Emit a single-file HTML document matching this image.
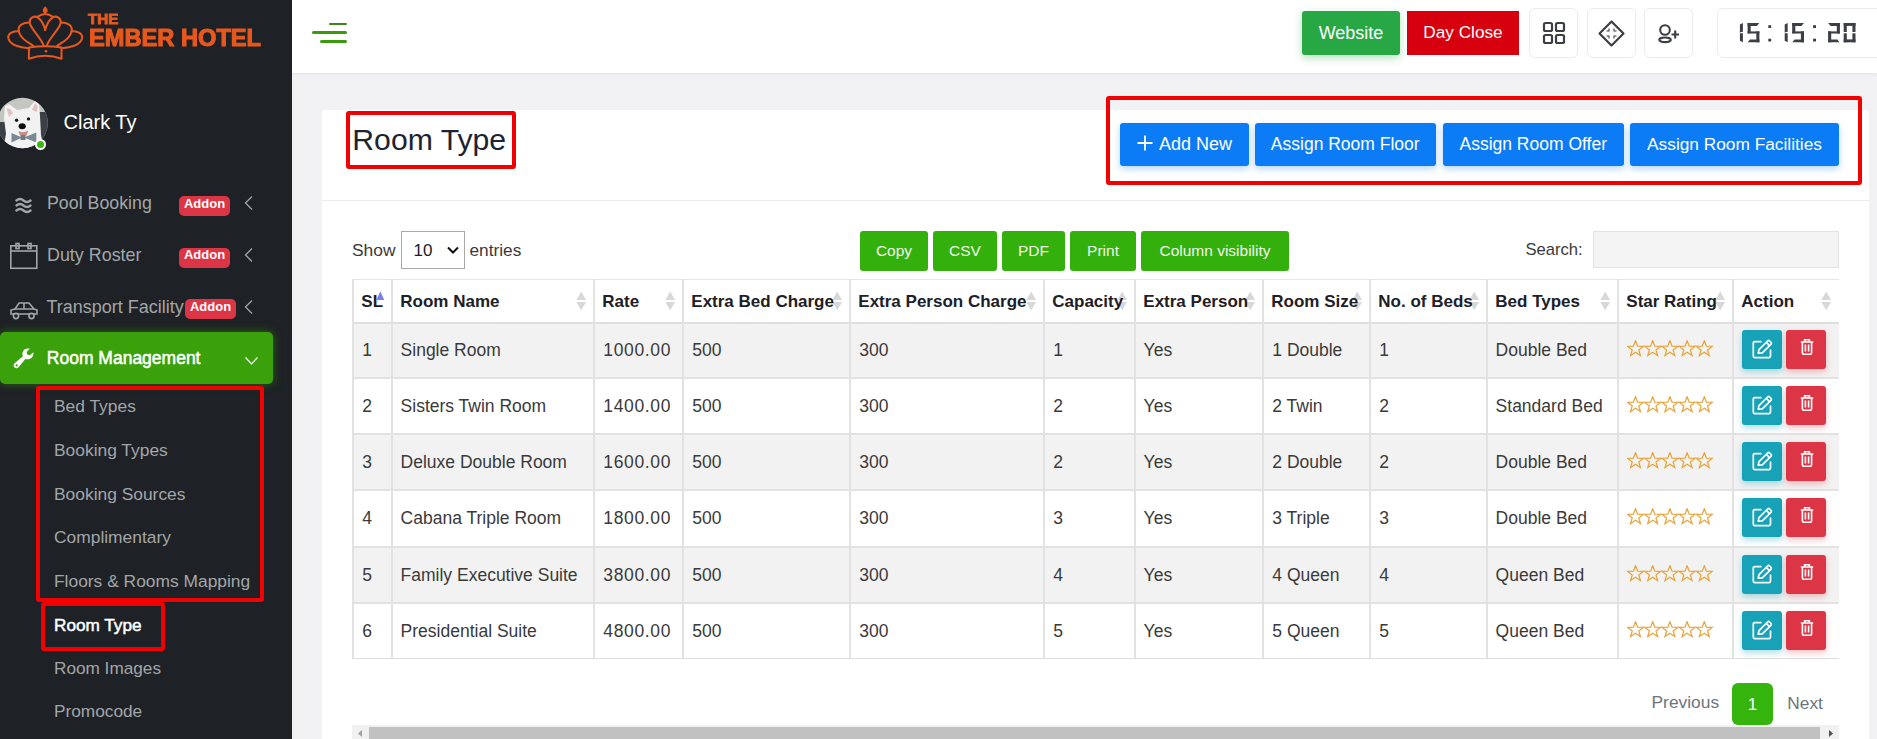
<!DOCTYPE html><html><head><meta charset="utf-8"><style>
*{box-sizing:border-box;margin:0;padding:0}
html,body{width:1877px;height:739px;overflow:hidden;background:#f2f2f4;font-family:"Liberation Sans", sans-serif}
.t{position:absolute;white-space:nowrap;line-height:1}
.a{position:absolute}
.rb{position:absolute;border:4.3px solid #f00000;border-radius:3px}
.btn{position:absolute;display:flex;align-items:center;justify-content:center;color:#fff;white-space:nowrap;line-height:1}
</style></head><body>
<div class="a" style="left:0;top:0;width:292px;height:739px;background:#1e2125"></div><svg class="a" style="left:0;top:0" width="92" height="64" viewBox="0 0 92 64">
<g fill="none" stroke="#e8581d" stroke-width="2" stroke-linecap="round" stroke-linejoin="round">
<path d="M37.5 16.8 Q45.2 11.2 52.9 16.8"/>
<path d="M43.6 45.5 C40 36 30.5 29 29.6 22.5 C29.3 17.5 34.5 15.3 38 17.6 C41.5 20.2 44 25 45.2 30"/>
<path d="M46.8 45.5 C50.4 36 59.9 29 60.8 22.5 C61.1 17.5 55.9 15.3 52.4 17.6 C48.9 20.2 46.4 25 45.2 30"/>
<path d="M29.6 22.6 C23 22.5 18.6 25 18.6 29.5 C18.8 34.5 22.5 38.5 26 41 C29 43 31.5 44.5 33.8 46.3"/>
<path d="M60.8 22.6 C67.4 22.5 71.8 25 71.8 29.5 C71.6 34.5 67.9 38.5 64.4 41 C61.4 43 58.9 44.5 56.6 46.3"/>
<path d="M18.8 31.2 C13 31 8.3 33 8.2 37 C8.3 41 11 43.5 15.5 45.5 C20 47.3 25 48 29 48.3"/>
<path d="M71.6 31.2 C77.4 31 82.1 33 82.2 37 C82.1 41 79.4 43.5 74.9 45.5 C70.4 47.3 65.4 48 61.4 48.3"/>
<path d="M28.9 47.4 Q45.2 45.2 61.5 47.4 L61.5 58.8 Q45.2 52.6 28.9 58.8 Z"/>
</g>
<path d="M45.2 6.3 C46.8 8 47.8 9.5 47.6 11 C47.4 12.4 46.4 13 45.2 13 C44 13 43 12.4 42.8 11 C42.6 9.5 43.6 8 45.2 6.3 Z" fill="#e8581d"/>
<circle cx="46" cy="51.3" r="1.3" fill="#e8581d"/>
</svg><div class="t" style="left:88.4px;top:12.43px;font-size:14.5px;color:#e8581d;font-weight:700;-webkit-text-stroke:0.9px #e8581d;transform:scaleX(1.05);transform-origin:left">THE</div>
<div class="t" style="left:88.6px;top:26.08px;font-size:24px;color:#e8581d;font-weight:700;-webkit-text-stroke:1.1px #e8581d;transform:scaleX(0.985);transform-origin:left">EMBER HOTEL</div>
<svg class="a" style="left:0;top:95px" width="52" height="57" viewBox="0 95 52 57">
<defs><clipPath id="cc"><circle cx="22.5" cy="123" r="25.3"/></clipPath><filter id="bl"><feGaussianBlur stdDeviation="0.7"/></filter></defs>
<g clip-path="url(#cc)">
<rect x="-5" y="95" width="60" height="60" fill="#c3c7c0"/>
<g filter="url(#bl)">
<rect x="39" y="112" width="14" height="30" fill="#3b4046"/>
<rect x="-5" y="122" width="13" height="20" fill="#3b4046"/>
<path d="M5 106 L9 104 L17 110 L29 108 L35 100.5 L39 104 L40 116 L41 135 L44 150 L3 150 L6 134 L4 118 Z" fill="#f2f2f2"/>
<path d="M6.5 108 L10 109 L13 113 L9 117 Z" fill="#e3c2c2"/>
<path d="M35 103 L37.5 106 L37 112 L32 110 Z" fill="#e3c2c2"/>
<circle cx="16.6" cy="120.3" r="1.7" fill="#1a1a1a"/>
<circle cx="28.5" cy="118.9" r="1.7" fill="#1a1a1a"/>
<ellipse cx="22.2" cy="126.3" rx="3.6" ry="3" fill="#111"/>
<path d="M18.5 131 Q23 133.5 28 130.5 L27 135 Q23 137 19.5 134.5 Z" fill="#c98b8b"/>
<path d="M11.5 133 L22 137.5 L11.5 142.5 Z M36.3 132.5 L24 137.5 L36.3 142.5 Z" fill="#7b8893"/>
<rect x="20.5" y="135" width="5" height="5" fill="#6f7c86"/>
</g></g></svg><div class="a" style="left:34.7px;top:138.7px;width:11.6px;height:11.6px;border-radius:50%;background:#fff"></div><div class="a" style="left:37px;top:141px;width:7px;height:7px;border-radius:50%;background:#3cb712"></div><div class="t" style="left:63.5px;top:111.87px;font-size:20px;color:#ffffff;font-weight:400;">Clark Ty</div>
<div class="t" style="left:47px;top:195.03px;font-size:17.8px;color:#a3a6a9;font-weight:400;">Pool Booking</div>
<div class="t" style="left:47px;top:247.35px;font-size:17.9px;color:#a3a6a9;font-weight:400;">Duty Roster</div>
<div class="t" style="left:46.5px;top:297.96px;font-size:18.0px;color:#a3a6a9;font-weight:400;">Transport Facility</div>
<div class="btn" style="left:179px;top:196px;width:51px;height:20px;border-radius:5px;background:#dc3545;font-size:13px;font-weight:700;padding-bottom:5.5px">Addon</div>
<div class="btn" style="left:179px;top:247.5px;width:51px;height:20px;border-radius:5px;background:#dc3545;font-size:13px;font-weight:700;padding-bottom:5.5px">Addon</div>
<div class="btn" style="left:185px;top:299px;width:51px;height:20px;border-radius:5px;background:#dc3545;font-size:13px;font-weight:700;padding-bottom:5.5px">Addon</div>
<svg class="a" style="left:244px;top:195px" width="10" height="16" viewBox="0 0 10 16"><path d="M8 1.5 L1.5 8 L8 14.5" fill="none" stroke="#a3a6a9" stroke-width="1.3"/></svg>
<svg class="a" style="left:244px;top:247px" width="10" height="16" viewBox="0 0 10 16"><path d="M8 1.5 L1.5 8 L8 14.5" fill="none" stroke="#a3a6a9" stroke-width="1.3"/></svg>
<svg class="a" style="left:244px;top:298.5px" width="10" height="16" viewBox="0 0 10 16"><path d="M8 1.5 L1.5 8 L8 14.5" fill="none" stroke="#a3a6a9" stroke-width="1.3"/></svg>
<svg class="a" style="left:14px;top:197px" width="20" height="17" viewBox="0 0 20 17"><g fill="none" stroke="#a3a6a9" stroke-width="2.4" stroke-linecap="round">
<path d="M2.5 3.5 Q6 0.5 9.5 3.5 T16.5 3.5"/><path d="M2.5 8.5 Q6 5.5 9.5 8.5 T16.5 8.5"/><path d="M2.5 13.5 Q6 10.5 9.5 13.5 T16.5 13.5"/></g></svg><svg class="a" style="left:9px;top:242px" width="30" height="28" viewBox="0 0 30 28"><g fill="none" stroke="#a3a6a9" stroke-width="1.6">
<rect x="1.8" y="3.8" width="26" height="22.5"/><path d="M1.8 9 H27.8"/><rect x="7" y="1.5" width="3" height="5"/><rect x="19" y="1.5" width="3" height="5"/></g></svg><svg class="a" style="left:9px;top:301px" width="30" height="20" viewBox="0 0 30 20"><g fill="none" stroke="#a3a6a9" stroke-width="1.6">
<path d="M2 13 V9 L6 8 L10 2 H20 L25 8 L28 9 V13 Z"/><path d="M6 8 H25 M15 2 V8"/><circle cx="7" cy="15" r="2.6" fill="#1e2125"/><circle cx="22.5" cy="15" r="2.6" fill="#1e2125"/></g></svg><div class="a" style="left:0;top:332px;width:273px;height:52px;border-radius:5px;background:#3aa10b;box-shadow:0 0 10px rgba(58,161,11,0.55)"></div><svg class="a" style="left:12px;top:348px" width="23" height="21" viewBox="0 0 23 21"><path d="M21.2 4.2 L18 7.3 L15.3 6.6 L14.6 3.9 L17.8 0.8 C14.9 -0.2 11.9 1 10.8 3.8 C10.2 5.3 10.3 6.9 10.9 8.2 L2.6 15.3 C1.3 16.5 1.3 18.4 2.5 19.5 C3.7 20.6 5.5 20.5 6.6 19.2 L13.3 10.9 C14.7 11.5 16.4 11.5 17.9 10.8 C20.6 9.6 21.9 6.9 21.2 4.2 Z" fill="#ffffff"/><circle cx="4.6" cy="17.4" r="1.1" fill="#3aa10b"/></svg><div class="t" style="left:46.8px;top:350.19px;font-size:17.5px;color:#ffffff;font-weight:400;-webkit-text-stroke:0.5px #ffffff">Room Management</div>
<svg class="a" style="left:244px;top:355px" width="16" height="11" viewBox="0 0 16 11"><path d="M1.5 2.5 L7.5 8.8 L13.5 2.5" fill="none" stroke="#fff" stroke-width="1.2"/></svg><div class="t" style="left:54px;top:398.27px;font-size:17.4px;color:#a3a6a9;font-weight:400;">Bed Types</div>
<div class="t" style="left:54px;top:441.87px;font-size:17.4px;color:#a3a6a9;font-weight:400;">Booking Types</div>
<div class="t" style="left:54px;top:485.67px;font-size:17.4px;color:#a3a6a9;font-weight:400;">Booking Sources</div>
<div class="t" style="left:54px;top:529.37px;font-size:17.4px;color:#a3a6a9;font-weight:400;">Complimentary</div>
<div class="t" style="left:54px;top:572.77px;font-size:17.4px;color:#a3a6a9;font-weight:400;">Floors &amp; Rooms Mapping</div>
<div class="t" style="left:54px;top:616.64px;font-size:17.2px;color:#ffffff;font-weight:400;-webkit-text-stroke:0.5px #ffffff">Room Type</div>
<div class="t" style="left:54px;top:660.44px;font-size:17.2px;color:#a3a6a9;font-weight:400;">Room Images</div>
<div class="t" style="left:54px;top:703.40px;font-size:17.25px;color:#a3a6a9;font-weight:400;">Promocode</div>
<div class="rb" style="left:35.5px;top:386px;width:228.5px;height:216.3px;border-width:4.5px"></div><div class="rb" style="left:40.8px;top:601.5px;width:124.4px;height:49px"></div><div class="a" style="left:292px;top:0;width:1585px;height:73px;background:#fff;box-shadow:0 1px 3px rgba(0,0,0,0.08)"></div><div class="a" style="left:329px;top:23px;width:18px;height:2px;border-radius:1px;background:#3d861f"></div><div class="a" style="left:312px;top:31px;width:35px;height:3px;border-radius:1.5px;background:#3a9a0e"></div><div class="a" style="left:320px;top:40px;width:27px;height:3px;border-radius:1.5px;background:#3a9a0e"></div><div class="btn" style="left:1302px;top:11px;width:98px;height:44px;border-radius:3px;background:#28a745;font-size:18px;box-shadow:0 3px 8px rgba(40,167,69,0.35)">Website</div><div class="btn" style="left:1407px;top:11px;width:112px;height:44px;background:#d6000f;font-size:17.2px">Day Close</div><div class="a" style="left:1529.2px;top:8px;width:49px;height:50px;border:1px solid #ececec;border-radius:6px;background:#fff"></div><div class="a" style="left:1587.2px;top:8px;width:49px;height:50px;border:1px solid #ececec;border-radius:6px;background:#fff"></div><div class="a" style="left:1644.4px;top:8px;width:49px;height:50px;border:1px solid #ececec;border-radius:6px;background:#fff"></div><svg class="a" style="left:1541px;top:20px" width="26" height="26" viewBox="0 0 26 26"><g fill="none" stroke="#3d3f45" stroke-width="2.2">
<rect x="3" y="3" width="8" height="8" rx="1.5"/><rect x="15" y="3" width="8" height="8" rx="1.5"/><rect x="3" y="15" width="8" height="8" rx="1.5"/><rect x="15" y="15" width="8" height="8" rx="1.5"/></g></svg><svg class="a" style="left:1597px;top:19px" width="29" height="29" viewBox="0 0 29 29"><g fill="none" stroke="#3d3f45" stroke-width="2.2" stroke-linejoin="round">
<path d="M14.5 2.5 L26.5 14.5 L14.5 26.5 L2.5 14.5 Z"/></g><g fill="none" stroke="#3d3f45" stroke-width="1.1">
<path d="M12 9.5 V12 H9.5 M17 9.5 V12 H19.5 M12 19.5 V17 H9.5 M17 19.5 V17 H19.5"/></g></svg><svg class="a" style="left:1656px;top:22px" width="26" height="23" viewBox="0 0 26 23"><g fill="none" stroke="#3d3f45" stroke-width="2.1">
<circle cx="9" cy="8" r="4.8"/><ellipse cx="9" cy="17.8" rx="5.8" ry="2.3"/><path d="M15.5 12.5 H23 M19.2 8.5 V16.5"/></g></svg><div class="a" style="left:1717px;top:8px;width:200px;height:50px;border:1px solid #ececec;border-radius:6px;background:#fff"></div><svg class="a" style="left:1735px;top:23.1px" width="125" height="20" viewBox="0 0 125 20"><g fill="#3d3f47"><polygon points="4.90,1.60 7.90,0.00 7.90,8.80 4.90,9.40"/><polygon points="4.90,10.30 7.90,10.30 7.90,19.30 4.90,17.70"/><polygon points="12.60,0.00 24.40,0.00 21.80,2.90 12.60,2.90"/><polygon points="12.60,0.00 15.70,0.00 15.70,10.30 12.60,10.30"/><polygon points="12.60,8.40 24.40,8.40 24.40,10.50 12.60,10.50"/><polygon points="21.30,8.40 24.40,8.40 24.40,19.30 21.30,19.30"/><polygon points="15.00,16.40 24.40,16.40 24.40,19.30 12.60,19.30"/><polygon points="49.70,1.60 52.70,0.00 52.70,8.80 49.70,9.40"/><polygon points="49.70,10.30 52.70,10.30 52.70,19.30 49.70,17.70"/><polygon points="57.20,0.00 69.00,0.00 66.40,2.90 57.20,2.90"/><polygon points="57.20,0.00 60.30,0.00 60.30,10.30 57.20,10.30"/><polygon points="57.20,8.40 69.00,8.40 69.00,10.50 57.20,10.50"/><polygon points="65.90,8.40 69.00,8.40 69.00,19.30 65.90,19.30"/><polygon points="59.60,16.40 69.00,16.40 69.00,19.30 57.20,19.30"/><polygon points="93.10,0.00 104.90,0.00 104.90,2.90 95.70,2.90"/><polygon points="101.80,0.00 104.90,0.00 104.90,10.50 101.80,10.50"/><polygon points="93.10,8.40 104.90,8.40 104.90,10.50 93.10,10.50"/><polygon points="93.10,8.40 96.20,8.40 96.20,19.30 93.10,19.30"/><polygon points="93.10,16.40 102.50,16.40 104.40,19.30 93.10,19.30"/><polygon points="108.70,0.00 120.50,0.00 120.50,2.90 108.70,2.90"/><polygon points="108.70,16.40 120.50,16.40 120.50,19.30 108.70,19.30"/><polygon points="108.70,0.00 111.80,0.00 111.80,9.00 108.70,9.00"/><polygon points="108.70,10.30 111.80,10.30 111.80,19.30 108.70,19.30"/><polygon points="117.40,0.00 120.50,0.00 120.50,9.00 117.40,9.00"/><polygon points="117.40,10.30 120.50,10.30 120.50,19.30 117.40,19.30"/><rect x="33.30" y="2.20" width="2.9" height="2.8"/><rect x="33.30" y="15.70" width="2.9" height="2.8"/><rect x="78.10" y="2.20" width="2.9" height="2.8"/><rect x="78.10" y="15.70" width="2.9" height="2.8"/></g></svg><div class="a" style="left:322px;top:110px;width:1547px;height:700px;background:#fff;border-radius:4px"></div><div class="a" style="left:322px;top:200px;width:1547px;height:1px;background:#ececec"></div><div class="t" style="left:352.3px;top:124.94px;font-size:30.2px;color:#1c2331;font-weight:400;">Room Type</div>
<div class="rb" style="left:345.5px;top:111.3px;width:170.2px;height:58.2px"></div><div class="rb" style="left:1106.1px;top:96.1px;width:755.5px;height:89.2px"></div><div class="btn" style="left:1120px;top:123px;width:129px;height:42.5px;border-radius:3px;background:#0b7cf6;font-size:18px;box-shadow:0 3px 7px rgba(11,124,246,0.3)"><svg width="18" height="18" viewBox="0 0 18 18" style="margin-right:4px;position:relative;top:-1.5px;left:-1px"><path d="M9 1.5 V16.5 M1.5 9 H16.5" stroke="#fff" stroke-width="1.8"/></svg>Add New</div>
<div class="btn" style="left:1255px;top:123px;width:180.5px;height:42.5px;border-radius:3px;background:#0b7cf6;font-size:17.5px;box-shadow:0 3px 7px rgba(11,124,246,0.3)">Assign Room Floor</div>
<div class="btn" style="left:1442.5px;top:123px;width:181.5px;height:42.5px;border-radius:3px;background:#0b7cf6;font-size:17.5px;box-shadow:0 3px 7px rgba(11,124,246,0.3)">Assign Room Offer</div>
<div class="btn" style="left:1630px;top:123px;width:209px;height:42.5px;border-radius:3px;background:#0b7cf6;font-size:17.3px;box-shadow:0 3px 7px rgba(11,124,246,0.3)">Assign Room Facilities</div>
<div class="t" style="left:352px;top:241.57px;font-size:17.4px;color:#3a3a3a;font-weight:400;">Show</div>
<div class="a" style="left:401px;top:231px;width:64px;height:38px;border:1px solid #a9a9a9;background:#fff"></div><div class="t" style="left:413.5px;top:241.91px;font-size:17px;color:#222;font-weight:400;">10</div>
<svg class="a" style="left:446px;top:245px" width="14" height="11" viewBox="0 0 14 11"><path d="M2 2.5 L7 7.5 L12 2.5" fill="none" stroke="#111" stroke-width="2"/></svg><div class="t" style="left:469.5px;top:241.70px;font-size:17.25px;color:#3a3a3a;font-weight:400;">entries</div>
<div class="btn" style="left:860px;top:231px;width:68px;height:40px;border-radius:3px;background:#33b00b;font-size:15.5px;color:#f2f5ee">Copy</div>
<div class="btn" style="left:933px;top:231px;width:64px;height:40px;border-radius:3px;background:#33b00b;font-size:15.5px;color:#f2f5ee">CSV</div>
<div class="btn" style="left:1002px;top:231px;width:63px;height:40px;border-radius:3px;background:#33b00b;font-size:15.5px;color:#f2f5ee">PDF</div>
<div class="btn" style="left:1070px;top:231px;width:66px;height:40px;border-radius:3px;background:#33b00b;font-size:15.5px;color:#f2f5ee">Print</div>
<div class="btn" style="left:1141px;top:231px;width:148px;height:40px;border-radius:3px;background:#33b00b;font-size:15.5px;color:#f2f5ee">Column visibility</div>
<div class="t" style="left:1525.5px;top:242.05px;font-size:16.6px;color:#3a3a3a;font-weight:400;">Search:</div>
<div class="a" style="left:1593px;top:231px;width:246px;height:37px;border:1px solid #e3e3e3;background:#f4f4f4"></div><div class="a" style="left:352px;top:279px;width:1487px;height:381px;overflow:hidden;background:#fff">
<div class="a" style="left:0;top:44px;width:1487px;height:54px;background:#f2f2f2"></div>
<div class="a" style="left:0;top:156px;width:1487px;height:54px;background:#f2f2f2"></div>
<div class="a" style="left:0;top:269px;width:1487px;height:54px;background:#f2f2f2"></div>
<div class="a" style="left:0;top:0px;width:1487px;height:1px;background:#e6e6e6"></div>
<div class="a" style="left:0;top:43px;width:1487px;height:1.5px;background:#dedede"></div>
<div class="a" style="left:0;top:98px;width:1487px;height:2px;background:#e2e2e2"></div>
<div class="a" style="left:0;top:154px;width:1487px;height:2px;background:#e2e2e2"></div>
<div class="a" style="left:0;top:210px;width:1487px;height:2px;background:#e2e2e2"></div>
<div class="a" style="left:0;top:267px;width:1487px;height:2px;background:#e2e2e2"></div>
<div class="a" style="left:0;top:323px;width:1487px;height:2px;background:#e2e2e2"></div>
<div class="a" style="left:0;top:379px;width:1487px;height:1.3px;background:#dedede"></div>
<div class="a" style="left:0px;top:0;width:2px;height:379px;background:#e2e2e2"></div>
<div class="a" style="left:39px;top:0;width:2px;height:379px;background:#e2e2e2"></div>
<div class="a" style="left:241px;top:0;width:2px;height:379px;background:#e2e2e2"></div>
<div class="a" style="left:330px;top:0;width:2px;height:379px;background:#e2e2e2"></div>
<div class="a" style="left:497px;top:0;width:2px;height:379px;background:#e2e2e2"></div>
<div class="a" style="left:691px;top:0;width:2px;height:379px;background:#e2e2e2"></div>
<div class="a" style="left:782px;top:0;width:2px;height:379px;background:#e2e2e2"></div>
<div class="a" style="left:910px;top:0;width:2px;height:379px;background:#e2e2e2"></div>
<div class="a" style="left:1017px;top:0;width:2px;height:379px;background:#e2e2e2"></div>
<div class="a" style="left:1134px;top:0;width:2px;height:379px;background:#e2e2e2"></div>
<div class="a" style="left:1265px;top:0;width:2px;height:379px;background:#e2e2e2"></div>
<div class="a" style="left:1380px;top:0;width:2px;height:379px;background:#e2e2e2"></div>
<svg class="a" style="left:224px;top:12px" width="11" height="20" viewBox="0 0 11 20"><path d="M0.3 8.9 L5.2 0.6 L10.1 8.9 Z M0.3 11 L5.2 19.2 L10.1 11 Z" fill="#d8d8d8"/></svg>
<svg class="a" style="left:313px;top:12px" width="11" height="20" viewBox="0 0 11 20"><path d="M0.3 8.9 L5.2 0.6 L10.1 8.9 Z M0.3 11 L5.2 19.2 L10.1 11 Z" fill="#d8d8d8"/></svg>
<svg class="a" style="left:480px;top:12px" width="11" height="20" viewBox="0 0 11 20"><path d="M0.3 8.9 L5.2 0.6 L10.1 8.9 Z M0.3 11 L5.2 19.2 L10.1 11 Z" fill="#d8d8d8"/></svg>
<svg class="a" style="left:674px;top:12px" width="11" height="20" viewBox="0 0 11 20"><path d="M0.3 8.9 L5.2 0.6 L10.1 8.9 Z M0.3 11 L5.2 19.2 L10.1 11 Z" fill="#d8d8d8"/></svg>
<svg class="a" style="left:765px;top:12px" width="11" height="20" viewBox="0 0 11 20"><path d="M0.3 8.9 L5.2 0.6 L10.1 8.9 Z M0.3 11 L5.2 19.2 L10.1 11 Z" fill="#d8d8d8"/></svg>
<svg class="a" style="left:893px;top:12px" width="11" height="20" viewBox="0 0 11 20"><path d="M0.3 8.9 L5.2 0.6 L10.1 8.9 Z M0.3 11 L5.2 19.2 L10.1 11 Z" fill="#d8d8d8"/></svg>
<svg class="a" style="left:1000px;top:12px" width="11" height="20" viewBox="0 0 11 20"><path d="M0.3 8.9 L5.2 0.6 L10.1 8.9 Z M0.3 11 L5.2 19.2 L10.1 11 Z" fill="#d8d8d8"/></svg>
<svg class="a" style="left:1117px;top:12px" width="11" height="20" viewBox="0 0 11 20"><path d="M0.3 8.9 L5.2 0.6 L10.1 8.9 Z M0.3 11 L5.2 19.2 L10.1 11 Z" fill="#d8d8d8"/></svg>
<svg class="a" style="left:1248px;top:12px" width="11" height="20" viewBox="0 0 11 20"><path d="M0.3 8.9 L5.2 0.6 L10.1 8.9 Z M0.3 11 L5.2 19.2 L10.1 11 Z" fill="#d8d8d8"/></svg>
<svg class="a" style="left:1363px;top:12px" width="11" height="20" viewBox="0 0 11 20"><path d="M0.3 8.9 L5.2 0.6 L10.1 8.9 Z M0.3 11 L5.2 19.2 L10.1 11 Z" fill="#d8d8d8"/></svg>
<svg class="a" style="left:1469px;top:12px" width="11" height="20" viewBox="0 0 11 20"><path d="M0.3 8.9 L5.2 0.6 L10.1 8.9 Z M0.3 11 L5.2 19.2 L10.1 11 Z" fill="#d8d8d8"/></svg>
<div class="t" style="left:9.300000000000011px;top:14.11px;font-size:17.0px;color:#1d2026;font-weight:700;">SL</div>
<div class="t" style="left:48.30000000000001px;top:14.11px;font-size:17.0px;color:#1d2026;font-weight:700;">Room Name</div>
<div class="t" style="left:250.29999999999995px;top:14.11px;font-size:17.0px;color:#1d2026;font-weight:700;">Rate</div>
<div class="t" style="left:339.29999999999995px;top:14.11px;font-size:17.0px;color:#1d2026;font-weight:700;">Extra Bed Charge</div>
<div class="t" style="left:506.29999999999995px;top:14.11px;font-size:17.0px;color:#1d2026;font-weight:700;">Extra Person Charge</div>
<div class="t" style="left:700.3px;top:14.11px;font-size:17.0px;color:#1d2026;font-weight:700;">Capacity</div>
<div class="t" style="left:791.3px;top:14.11px;font-size:17.0px;color:#1d2026;font-weight:700;">Extra Person</div>
<div class="t" style="left:919.3px;top:14.11px;font-size:17.0px;color:#1d2026;font-weight:700;">Room Size</div>
<div class="t" style="left:1026.3px;top:14.11px;font-size:17.0px;color:#1d2026;font-weight:700;">No. of Beds</div>
<div class="t" style="left:1143.3px;top:14.11px;font-size:17.0px;color:#1d2026;font-weight:700;">Bed Types</div>
<div class="t" style="left:1274.3px;top:14.11px;font-size:17.0px;color:#1d2026;font-weight:700;">Star Rating</div>
<div class="t" style="left:1389.3px;top:14.11px;font-size:17.0px;color:#1d2026;font-weight:700;">Action</div>
<svg class="a" style="left:23.5px;top:12px" width="9" height="10" viewBox="0 0 9 10"><path d="M0.3 8.9 L4.3 0.6 L8.3 8.9 Z" fill="#7b80e2"/></svg>
<div class="t" style="left:10.300000000000011px;top:62.79px;font-size:17.5px;color:#3a3a3a;font-weight:400;">1</div>
<div class="t" style="left:48.60000000000002px;top:62.79px;font-size:17.5px;color:#3a3a3a;font-weight:400;">Single Room</div>
<div class="t" style="left:251.29999999999995px;top:62.79px;font-size:17.5px;color:#3a3a3a;font-weight:400;letter-spacing:0.65px">1000.00</div>
<div class="t" style="left:340.30000000000007px;top:62.79px;font-size:17.5px;color:#3a3a3a;font-weight:400;">500</div>
<div class="t" style="left:507.30000000000007px;top:62.79px;font-size:17.5px;color:#3a3a3a;font-weight:400;">300</div>
<div class="t" style="left:701.3px;top:62.79px;font-size:17.5px;color:#3a3a3a;font-weight:400;">1</div>
<div class="t" style="left:791.5999999999999px;top:62.79px;font-size:17.5px;color:#3a3a3a;font-weight:400;">Yes</div>
<div class="t" style="left:920.3px;top:62.79px;font-size:17.5px;color:#3a3a3a;font-weight:400;">1 Double</div>
<div class="t" style="left:1027.3px;top:62.79px;font-size:17.5px;color:#3a3a3a;font-weight:400;">1</div>
<div class="t" style="left:1143.6px;top:62.79px;font-size:17.5px;color:#3a3a3a;font-weight:400;">Double Bed</div>
<svg class="a" style="left:1275px;top:60.5px" width="88" height="17" viewBox="0 0 88 17"><g transform="translate(0.0,0)"><path d="M8.5 0.8 L10.6 6.2 L16.3 6.4 L11.8 9.9 L13.4 15.5 L8.5 12.3 L3.6 15.5 L5.2 9.9 L0.7 6.4 L6.4 6.2 Z" fill="none" stroke="#e9a43c" stroke-width="1.25" stroke-linejoin="miter"/></g><g transform="translate(17.2,0)"><path d="M8.5 0.8 L10.6 6.2 L16.3 6.4 L11.8 9.9 L13.4 15.5 L8.5 12.3 L3.6 15.5 L5.2 9.9 L0.7 6.4 L6.4 6.2 Z" fill="none" stroke="#e9a43c" stroke-width="1.25" stroke-linejoin="miter"/></g><g transform="translate(34.4,0)"><path d="M8.5 0.8 L10.6 6.2 L16.3 6.4 L11.8 9.9 L13.4 15.5 L8.5 12.3 L3.6 15.5 L5.2 9.9 L0.7 6.4 L6.4 6.2 Z" fill="none" stroke="#e9a43c" stroke-width="1.25" stroke-linejoin="miter"/></g><g transform="translate(51.599999999999994,0)"><path d="M8.5 0.8 L10.6 6.2 L16.3 6.4 L11.8 9.9 L13.4 15.5 L8.5 12.3 L3.6 15.5 L5.2 9.9 L0.7 6.4 L6.4 6.2 Z" fill="none" stroke="#e9a43c" stroke-width="1.25" stroke-linejoin="miter"/></g><g transform="translate(68.8,0)"><path d="M8.5 0.8 L10.6 6.2 L16.3 6.4 L11.8 9.9 L13.4 15.5 L8.5 12.3 L3.6 15.5 L5.2 9.9 L0.7 6.4 L6.4 6.2 Z" fill="none" stroke="#e9a43c" stroke-width="1.25" stroke-linejoin="miter"/></g></svg>
<div class="a" style="left:1390px;top:50.69999999999999px;width:40px;height:39px;border-radius:3px;background:#17a2b8;box-shadow:0 3px 6px rgba(23,162,184,0.35)"></div>
<div class="a" style="left:1434px;top:50.69999999999999px;width:40px;height:39px;border-radius:3px;background:#dc3545;box-shadow:0 3px 6px rgba(220,53,69,0.3)"></div>
<svg class="a" style="left:1400px;top:58.69999999999999px" width="21" height="21" viewBox="0 0 21 21"><g fill="none" stroke="#fff" stroke-width="1.7" stroke-linejoin="round"><path d="M9.5 3.6 H2.6 Q1.3 3.6 1.3 4.9 V18.3 Q1.3 19.6 2.6 19.6 H17.2 Q18.5 19.6 18.5 18.3 V11.5"/><path d="M6.2 15.2 L7 11.6 L15.6 3 Q16.6 2 17.6 3 L18.9 4.3 Q19.9 5.3 18.9 6.3 L10.3 14.9 Z"/><path d="M14.3 4.4 L17.5 7.6"/></g></svg>
<svg class="a" style="left:1448px;top:58.69999999999999px" width="14" height="19" viewBox="0 0 14 19"><g fill="none" stroke="#fff" stroke-width="1.6"><path d="M0.8 4 H13.2 M4.6 4 V1.8 H9.4 V4"/><path d="M2.4 4 V15 Q2.4 16.2 3.6 16.2 H10.4 Q11.6 16.2 11.6 15 V4"/><path d="M5.4 6.5 V13.6 M8.6 6.5 V13.6"/></g></svg>
<div class="t" style="left:10.300000000000011px;top:118.79px;font-size:17.5px;color:#3a3a3a;font-weight:400;">2</div>
<div class="t" style="left:48.60000000000002px;top:118.79px;font-size:17.5px;color:#3a3a3a;font-weight:400;">Sisters Twin Room</div>
<div class="t" style="left:251.29999999999995px;top:118.79px;font-size:17.5px;color:#3a3a3a;font-weight:400;letter-spacing:0.65px">1400.00</div>
<div class="t" style="left:340.30000000000007px;top:118.79px;font-size:17.5px;color:#3a3a3a;font-weight:400;">500</div>
<div class="t" style="left:507.30000000000007px;top:118.79px;font-size:17.5px;color:#3a3a3a;font-weight:400;">300</div>
<div class="t" style="left:701.3px;top:118.79px;font-size:17.5px;color:#3a3a3a;font-weight:400;">2</div>
<div class="t" style="left:791.5999999999999px;top:118.79px;font-size:17.5px;color:#3a3a3a;font-weight:400;">Yes</div>
<div class="t" style="left:920.3px;top:118.79px;font-size:17.5px;color:#3a3a3a;font-weight:400;">2 Twin</div>
<div class="t" style="left:1027.3px;top:118.79px;font-size:17.5px;color:#3a3a3a;font-weight:400;">2</div>
<div class="t" style="left:1143.6px;top:118.79px;font-size:17.5px;color:#3a3a3a;font-weight:400;">Standard Bed</div>
<svg class="a" style="left:1275px;top:116.5px" width="88" height="17" viewBox="0 0 88 17"><g transform="translate(0.0,0)"><path d="M8.5 0.8 L10.6 6.2 L16.3 6.4 L11.8 9.9 L13.4 15.5 L8.5 12.3 L3.6 15.5 L5.2 9.9 L0.7 6.4 L6.4 6.2 Z" fill="none" stroke="#e9a43c" stroke-width="1.25" stroke-linejoin="miter"/></g><g transform="translate(17.2,0)"><path d="M8.5 0.8 L10.6 6.2 L16.3 6.4 L11.8 9.9 L13.4 15.5 L8.5 12.3 L3.6 15.5 L5.2 9.9 L0.7 6.4 L6.4 6.2 Z" fill="none" stroke="#e9a43c" stroke-width="1.25" stroke-linejoin="miter"/></g><g transform="translate(34.4,0)"><path d="M8.5 0.8 L10.6 6.2 L16.3 6.4 L11.8 9.9 L13.4 15.5 L8.5 12.3 L3.6 15.5 L5.2 9.9 L0.7 6.4 L6.4 6.2 Z" fill="none" stroke="#e9a43c" stroke-width="1.25" stroke-linejoin="miter"/></g><g transform="translate(51.599999999999994,0)"><path d="M8.5 0.8 L10.6 6.2 L16.3 6.4 L11.8 9.9 L13.4 15.5 L8.5 12.3 L3.6 15.5 L5.2 9.9 L0.7 6.4 L6.4 6.2 Z" fill="none" stroke="#e9a43c" stroke-width="1.25" stroke-linejoin="miter"/></g><g transform="translate(68.8,0)"><path d="M8.5 0.8 L10.6 6.2 L16.3 6.4 L11.8 9.9 L13.4 15.5 L8.5 12.3 L3.6 15.5 L5.2 9.9 L0.7 6.4 L6.4 6.2 Z" fill="none" stroke="#e9a43c" stroke-width="1.25" stroke-linejoin="miter"/></g></svg>
<div class="a" style="left:1390px;top:106.69999999999999px;width:40px;height:39px;border-radius:3px;background:#17a2b8;box-shadow:0 3px 6px rgba(23,162,184,0.35)"></div>
<div class="a" style="left:1434px;top:106.69999999999999px;width:40px;height:39px;border-radius:3px;background:#dc3545;box-shadow:0 3px 6px rgba(220,53,69,0.3)"></div>
<svg class="a" style="left:1400px;top:114.69999999999999px" width="21" height="21" viewBox="0 0 21 21"><g fill="none" stroke="#fff" stroke-width="1.7" stroke-linejoin="round"><path d="M9.5 3.6 H2.6 Q1.3 3.6 1.3 4.9 V18.3 Q1.3 19.6 2.6 19.6 H17.2 Q18.5 19.6 18.5 18.3 V11.5"/><path d="M6.2 15.2 L7 11.6 L15.6 3 Q16.6 2 17.6 3 L18.9 4.3 Q19.9 5.3 18.9 6.3 L10.3 14.9 Z"/><path d="M14.3 4.4 L17.5 7.6"/></g></svg>
<svg class="a" style="left:1448px;top:114.69999999999999px" width="14" height="19" viewBox="0 0 14 19"><g fill="none" stroke="#fff" stroke-width="1.6"><path d="M0.8 4 H13.2 M4.6 4 V1.8 H9.4 V4"/><path d="M2.4 4 V15 Q2.4 16.2 3.6 16.2 H10.4 Q11.6 16.2 11.6 15 V4"/><path d="M5.4 6.5 V13.6 M8.6 6.5 V13.6"/></g></svg>
<div class="t" style="left:10.300000000000011px;top:174.79px;font-size:17.5px;color:#3a3a3a;font-weight:400;">3</div>
<div class="t" style="left:48.60000000000002px;top:174.79px;font-size:17.5px;color:#3a3a3a;font-weight:400;">Deluxe Double Room</div>
<div class="t" style="left:251.29999999999995px;top:174.79px;font-size:17.5px;color:#3a3a3a;font-weight:400;letter-spacing:0.65px">1600.00</div>
<div class="t" style="left:340.30000000000007px;top:174.79px;font-size:17.5px;color:#3a3a3a;font-weight:400;">500</div>
<div class="t" style="left:507.30000000000007px;top:174.79px;font-size:17.5px;color:#3a3a3a;font-weight:400;">300</div>
<div class="t" style="left:701.3px;top:174.79px;font-size:17.5px;color:#3a3a3a;font-weight:400;">2</div>
<div class="t" style="left:791.5999999999999px;top:174.79px;font-size:17.5px;color:#3a3a3a;font-weight:400;">Yes</div>
<div class="t" style="left:920.3px;top:174.79px;font-size:17.5px;color:#3a3a3a;font-weight:400;">2 Double</div>
<div class="t" style="left:1027.3px;top:174.79px;font-size:17.5px;color:#3a3a3a;font-weight:400;">2</div>
<div class="t" style="left:1143.6px;top:174.79px;font-size:17.5px;color:#3a3a3a;font-weight:400;">Double Bed</div>
<svg class="a" style="left:1275px;top:172.5px" width="88" height="17" viewBox="0 0 88 17"><g transform="translate(0.0,0)"><path d="M8.5 0.8 L10.6 6.2 L16.3 6.4 L11.8 9.9 L13.4 15.5 L8.5 12.3 L3.6 15.5 L5.2 9.9 L0.7 6.4 L6.4 6.2 Z" fill="none" stroke="#e9a43c" stroke-width="1.25" stroke-linejoin="miter"/></g><g transform="translate(17.2,0)"><path d="M8.5 0.8 L10.6 6.2 L16.3 6.4 L11.8 9.9 L13.4 15.5 L8.5 12.3 L3.6 15.5 L5.2 9.9 L0.7 6.4 L6.4 6.2 Z" fill="none" stroke="#e9a43c" stroke-width="1.25" stroke-linejoin="miter"/></g><g transform="translate(34.4,0)"><path d="M8.5 0.8 L10.6 6.2 L16.3 6.4 L11.8 9.9 L13.4 15.5 L8.5 12.3 L3.6 15.5 L5.2 9.9 L0.7 6.4 L6.4 6.2 Z" fill="none" stroke="#e9a43c" stroke-width="1.25" stroke-linejoin="miter"/></g><g transform="translate(51.599999999999994,0)"><path d="M8.5 0.8 L10.6 6.2 L16.3 6.4 L11.8 9.9 L13.4 15.5 L8.5 12.3 L3.6 15.5 L5.2 9.9 L0.7 6.4 L6.4 6.2 Z" fill="none" stroke="#e9a43c" stroke-width="1.25" stroke-linejoin="miter"/></g><g transform="translate(68.8,0)"><path d="M8.5 0.8 L10.6 6.2 L16.3 6.4 L11.8 9.9 L13.4 15.5 L8.5 12.3 L3.6 15.5 L5.2 9.9 L0.7 6.4 L6.4 6.2 Z" fill="none" stroke="#e9a43c" stroke-width="1.25" stroke-linejoin="miter"/></g></svg>
<div class="a" style="left:1390px;top:162.7px;width:40px;height:39px;border-radius:3px;background:#17a2b8;box-shadow:0 3px 6px rgba(23,162,184,0.35)"></div>
<div class="a" style="left:1434px;top:162.7px;width:40px;height:39px;border-radius:3px;background:#dc3545;box-shadow:0 3px 6px rgba(220,53,69,0.3)"></div>
<svg class="a" style="left:1400px;top:170.7px" width="21" height="21" viewBox="0 0 21 21"><g fill="none" stroke="#fff" stroke-width="1.7" stroke-linejoin="round"><path d="M9.5 3.6 H2.6 Q1.3 3.6 1.3 4.9 V18.3 Q1.3 19.6 2.6 19.6 H17.2 Q18.5 19.6 18.5 18.3 V11.5"/><path d="M6.2 15.2 L7 11.6 L15.6 3 Q16.6 2 17.6 3 L18.9 4.3 Q19.9 5.3 18.9 6.3 L10.3 14.9 Z"/><path d="M14.3 4.4 L17.5 7.6"/></g></svg>
<svg class="a" style="left:1448px;top:170.7px" width="14" height="19" viewBox="0 0 14 19"><g fill="none" stroke="#fff" stroke-width="1.6"><path d="M0.8 4 H13.2 M4.6 4 V1.8 H9.4 V4"/><path d="M2.4 4 V15 Q2.4 16.2 3.6 16.2 H10.4 Q11.6 16.2 11.6 15 V4"/><path d="M5.4 6.5 V13.6 M8.6 6.5 V13.6"/></g></svg>
<div class="t" style="left:10.300000000000011px;top:231.29px;font-size:17.5px;color:#3a3a3a;font-weight:400;">4</div>
<div class="t" style="left:48.60000000000002px;top:231.29px;font-size:17.5px;color:#3a3a3a;font-weight:400;">Cabana Triple Room</div>
<div class="t" style="left:251.29999999999995px;top:231.29px;font-size:17.5px;color:#3a3a3a;font-weight:400;letter-spacing:0.65px">1800.00</div>
<div class="t" style="left:340.30000000000007px;top:231.29px;font-size:17.5px;color:#3a3a3a;font-weight:400;">500</div>
<div class="t" style="left:507.30000000000007px;top:231.29px;font-size:17.5px;color:#3a3a3a;font-weight:400;">300</div>
<div class="t" style="left:701.3px;top:231.29px;font-size:17.5px;color:#3a3a3a;font-weight:400;">3</div>
<div class="t" style="left:791.5999999999999px;top:231.29px;font-size:17.5px;color:#3a3a3a;font-weight:400;">Yes</div>
<div class="t" style="left:920.3px;top:231.29px;font-size:17.5px;color:#3a3a3a;font-weight:400;">3 Triple</div>
<div class="t" style="left:1027.3px;top:231.29px;font-size:17.5px;color:#3a3a3a;font-weight:400;">3</div>
<div class="t" style="left:1143.6px;top:231.29px;font-size:17.5px;color:#3a3a3a;font-weight:400;">Double Bed</div>
<svg class="a" style="left:1275px;top:229.0px" width="88" height="17" viewBox="0 0 88 17"><g transform="translate(0.0,0)"><path d="M8.5 0.8 L10.6 6.2 L16.3 6.4 L11.8 9.9 L13.4 15.5 L8.5 12.3 L3.6 15.5 L5.2 9.9 L0.7 6.4 L6.4 6.2 Z" fill="none" stroke="#e9a43c" stroke-width="1.25" stroke-linejoin="miter"/></g><g transform="translate(17.2,0)"><path d="M8.5 0.8 L10.6 6.2 L16.3 6.4 L11.8 9.9 L13.4 15.5 L8.5 12.3 L3.6 15.5 L5.2 9.9 L0.7 6.4 L6.4 6.2 Z" fill="none" stroke="#e9a43c" stroke-width="1.25" stroke-linejoin="miter"/></g><g transform="translate(34.4,0)"><path d="M8.5 0.8 L10.6 6.2 L16.3 6.4 L11.8 9.9 L13.4 15.5 L8.5 12.3 L3.6 15.5 L5.2 9.9 L0.7 6.4 L6.4 6.2 Z" fill="none" stroke="#e9a43c" stroke-width="1.25" stroke-linejoin="miter"/></g><g transform="translate(51.599999999999994,0)"><path d="M8.5 0.8 L10.6 6.2 L16.3 6.4 L11.8 9.9 L13.4 15.5 L8.5 12.3 L3.6 15.5 L5.2 9.9 L0.7 6.4 L6.4 6.2 Z" fill="none" stroke="#e9a43c" stroke-width="1.25" stroke-linejoin="miter"/></g><g transform="translate(68.8,0)"><path d="M8.5 0.8 L10.6 6.2 L16.3 6.4 L11.8 9.9 L13.4 15.5 L8.5 12.3 L3.6 15.5 L5.2 9.9 L0.7 6.4 L6.4 6.2 Z" fill="none" stroke="#e9a43c" stroke-width="1.25" stroke-linejoin="miter"/></g></svg>
<div class="a" style="left:1390px;top:219.2px;width:40px;height:39px;border-radius:3px;background:#17a2b8;box-shadow:0 3px 6px rgba(23,162,184,0.35)"></div>
<div class="a" style="left:1434px;top:219.2px;width:40px;height:39px;border-radius:3px;background:#dc3545;box-shadow:0 3px 6px rgba(220,53,69,0.3)"></div>
<svg class="a" style="left:1400px;top:227.2px" width="21" height="21" viewBox="0 0 21 21"><g fill="none" stroke="#fff" stroke-width="1.7" stroke-linejoin="round"><path d="M9.5 3.6 H2.6 Q1.3 3.6 1.3 4.9 V18.3 Q1.3 19.6 2.6 19.6 H17.2 Q18.5 19.6 18.5 18.3 V11.5"/><path d="M6.2 15.2 L7 11.6 L15.6 3 Q16.6 2 17.6 3 L18.9 4.3 Q19.9 5.3 18.9 6.3 L10.3 14.9 Z"/><path d="M14.3 4.4 L17.5 7.6"/></g></svg>
<svg class="a" style="left:1448px;top:227.2px" width="14" height="19" viewBox="0 0 14 19"><g fill="none" stroke="#fff" stroke-width="1.6"><path d="M0.8 4 H13.2 M4.6 4 V1.8 H9.4 V4"/><path d="M2.4 4 V15 Q2.4 16.2 3.6 16.2 H10.4 Q11.6 16.2 11.6 15 V4"/><path d="M5.4 6.5 V13.6 M8.6 6.5 V13.6"/></g></svg>
<div class="t" style="left:10.300000000000011px;top:287.79px;font-size:17.5px;color:#3a3a3a;font-weight:400;">5</div>
<div class="t" style="left:48.60000000000002px;top:287.79px;font-size:17.5px;color:#3a3a3a;font-weight:400;">Family Executive Suite</div>
<div class="t" style="left:251.29999999999995px;top:287.79px;font-size:17.5px;color:#3a3a3a;font-weight:400;letter-spacing:0.65px">3800.00</div>
<div class="t" style="left:340.30000000000007px;top:287.79px;font-size:17.5px;color:#3a3a3a;font-weight:400;">500</div>
<div class="t" style="left:507.30000000000007px;top:287.79px;font-size:17.5px;color:#3a3a3a;font-weight:400;">300</div>
<div class="t" style="left:701.3px;top:287.79px;font-size:17.5px;color:#3a3a3a;font-weight:400;">4</div>
<div class="t" style="left:791.5999999999999px;top:287.79px;font-size:17.5px;color:#3a3a3a;font-weight:400;">Yes</div>
<div class="t" style="left:920.3px;top:287.79px;font-size:17.5px;color:#3a3a3a;font-weight:400;">4 Queen</div>
<div class="t" style="left:1027.3px;top:287.79px;font-size:17.5px;color:#3a3a3a;font-weight:400;">4</div>
<div class="t" style="left:1143.6px;top:287.79px;font-size:17.5px;color:#3a3a3a;font-weight:400;">Queen Bed</div>
<svg class="a" style="left:1275px;top:285.5px" width="88" height="17" viewBox="0 0 88 17"><g transform="translate(0.0,0)"><path d="M8.5 0.8 L10.6 6.2 L16.3 6.4 L11.8 9.9 L13.4 15.5 L8.5 12.3 L3.6 15.5 L5.2 9.9 L0.7 6.4 L6.4 6.2 Z" fill="none" stroke="#e9a43c" stroke-width="1.25" stroke-linejoin="miter"/></g><g transform="translate(17.2,0)"><path d="M8.5 0.8 L10.6 6.2 L16.3 6.4 L11.8 9.9 L13.4 15.5 L8.5 12.3 L3.6 15.5 L5.2 9.9 L0.7 6.4 L6.4 6.2 Z" fill="none" stroke="#e9a43c" stroke-width="1.25" stroke-linejoin="miter"/></g><g transform="translate(34.4,0)"><path d="M8.5 0.8 L10.6 6.2 L16.3 6.4 L11.8 9.9 L13.4 15.5 L8.5 12.3 L3.6 15.5 L5.2 9.9 L0.7 6.4 L6.4 6.2 Z" fill="none" stroke="#e9a43c" stroke-width="1.25" stroke-linejoin="miter"/></g><g transform="translate(51.599999999999994,0)"><path d="M8.5 0.8 L10.6 6.2 L16.3 6.4 L11.8 9.9 L13.4 15.5 L8.5 12.3 L3.6 15.5 L5.2 9.9 L0.7 6.4 L6.4 6.2 Z" fill="none" stroke="#e9a43c" stroke-width="1.25" stroke-linejoin="miter"/></g><g transform="translate(68.8,0)"><path d="M8.5 0.8 L10.6 6.2 L16.3 6.4 L11.8 9.9 L13.4 15.5 L8.5 12.3 L3.6 15.5 L5.2 9.9 L0.7 6.4 L6.4 6.2 Z" fill="none" stroke="#e9a43c" stroke-width="1.25" stroke-linejoin="miter"/></g></svg>
<div class="a" style="left:1390px;top:275.70000000000005px;width:40px;height:39px;border-radius:3px;background:#17a2b8;box-shadow:0 3px 6px rgba(23,162,184,0.35)"></div>
<div class="a" style="left:1434px;top:275.70000000000005px;width:40px;height:39px;border-radius:3px;background:#dc3545;box-shadow:0 3px 6px rgba(220,53,69,0.3)"></div>
<svg class="a" style="left:1400px;top:283.70000000000005px" width="21" height="21" viewBox="0 0 21 21"><g fill="none" stroke="#fff" stroke-width="1.7" stroke-linejoin="round"><path d="M9.5 3.6 H2.6 Q1.3 3.6 1.3 4.9 V18.3 Q1.3 19.6 2.6 19.6 H17.2 Q18.5 19.6 18.5 18.3 V11.5"/><path d="M6.2 15.2 L7 11.6 L15.6 3 Q16.6 2 17.6 3 L18.9 4.3 Q19.9 5.3 18.9 6.3 L10.3 14.9 Z"/><path d="M14.3 4.4 L17.5 7.6"/></g></svg>
<svg class="a" style="left:1448px;top:283.70000000000005px" width="14" height="19" viewBox="0 0 14 19"><g fill="none" stroke="#fff" stroke-width="1.6"><path d="M0.8 4 H13.2 M4.6 4 V1.8 H9.4 V4"/><path d="M2.4 4 V15 Q2.4 16.2 3.6 16.2 H10.4 Q11.6 16.2 11.6 15 V4"/><path d="M5.4 6.5 V13.6 M8.6 6.5 V13.6"/></g></svg>
<div class="t" style="left:10.300000000000011px;top:343.79px;font-size:17.5px;color:#3a3a3a;font-weight:400;">6</div>
<div class="t" style="left:48.60000000000002px;top:343.79px;font-size:17.5px;color:#3a3a3a;font-weight:400;">Presidential Suite</div>
<div class="t" style="left:251.29999999999995px;top:343.79px;font-size:17.5px;color:#3a3a3a;font-weight:400;letter-spacing:0.65px">4800.00</div>
<div class="t" style="left:340.30000000000007px;top:343.79px;font-size:17.5px;color:#3a3a3a;font-weight:400;">500</div>
<div class="t" style="left:507.30000000000007px;top:343.79px;font-size:17.5px;color:#3a3a3a;font-weight:400;">300</div>
<div class="t" style="left:701.3px;top:343.79px;font-size:17.5px;color:#3a3a3a;font-weight:400;">5</div>
<div class="t" style="left:791.5999999999999px;top:343.79px;font-size:17.5px;color:#3a3a3a;font-weight:400;">Yes</div>
<div class="t" style="left:920.3px;top:343.79px;font-size:17.5px;color:#3a3a3a;font-weight:400;">5 Queen</div>
<div class="t" style="left:1027.3px;top:343.79px;font-size:17.5px;color:#3a3a3a;font-weight:400;">5</div>
<div class="t" style="left:1143.6px;top:343.79px;font-size:17.5px;color:#3a3a3a;font-weight:400;">Queen Bed</div>
<svg class="a" style="left:1275px;top:341.5px" width="88" height="17" viewBox="0 0 88 17"><g transform="translate(0.0,0)"><path d="M8.5 0.8 L10.6 6.2 L16.3 6.4 L11.8 9.9 L13.4 15.5 L8.5 12.3 L3.6 15.5 L5.2 9.9 L0.7 6.4 L6.4 6.2 Z" fill="none" stroke="#e9a43c" stroke-width="1.25" stroke-linejoin="miter"/></g><g transform="translate(17.2,0)"><path d="M8.5 0.8 L10.6 6.2 L16.3 6.4 L11.8 9.9 L13.4 15.5 L8.5 12.3 L3.6 15.5 L5.2 9.9 L0.7 6.4 L6.4 6.2 Z" fill="none" stroke="#e9a43c" stroke-width="1.25" stroke-linejoin="miter"/></g><g transform="translate(34.4,0)"><path d="M8.5 0.8 L10.6 6.2 L16.3 6.4 L11.8 9.9 L13.4 15.5 L8.5 12.3 L3.6 15.5 L5.2 9.9 L0.7 6.4 L6.4 6.2 Z" fill="none" stroke="#e9a43c" stroke-width="1.25" stroke-linejoin="miter"/></g><g transform="translate(51.599999999999994,0)"><path d="M8.5 0.8 L10.6 6.2 L16.3 6.4 L11.8 9.9 L13.4 15.5 L8.5 12.3 L3.6 15.5 L5.2 9.9 L0.7 6.4 L6.4 6.2 Z" fill="none" stroke="#e9a43c" stroke-width="1.25" stroke-linejoin="miter"/></g><g transform="translate(68.8,0)"><path d="M8.5 0.8 L10.6 6.2 L16.3 6.4 L11.8 9.9 L13.4 15.5 L8.5 12.3 L3.6 15.5 L5.2 9.9 L0.7 6.4 L6.4 6.2 Z" fill="none" stroke="#e9a43c" stroke-width="1.25" stroke-linejoin="miter"/></g></svg>
<div class="a" style="left:1390px;top:331.70000000000005px;width:40px;height:39px;border-radius:3px;background:#17a2b8;box-shadow:0 3px 6px rgba(23,162,184,0.35)"></div>
<div class="a" style="left:1434px;top:331.70000000000005px;width:40px;height:39px;border-radius:3px;background:#dc3545;box-shadow:0 3px 6px rgba(220,53,69,0.3)"></div>
<svg class="a" style="left:1400px;top:339.70000000000005px" width="21" height="21" viewBox="0 0 21 21"><g fill="none" stroke="#fff" stroke-width="1.7" stroke-linejoin="round"><path d="M9.5 3.6 H2.6 Q1.3 3.6 1.3 4.9 V18.3 Q1.3 19.6 2.6 19.6 H17.2 Q18.5 19.6 18.5 18.3 V11.5"/><path d="M6.2 15.2 L7 11.6 L15.6 3 Q16.6 2 17.6 3 L18.9 4.3 Q19.9 5.3 18.9 6.3 L10.3 14.9 Z"/><path d="M14.3 4.4 L17.5 7.6"/></g></svg>
<svg class="a" style="left:1448px;top:339.70000000000005px" width="14" height="19" viewBox="0 0 14 19"><g fill="none" stroke="#fff" stroke-width="1.6"><path d="M0.8 4 H13.2 M4.6 4 V1.8 H9.4 V4"/><path d="M2.4 4 V15 Q2.4 16.2 3.6 16.2 H10.4 Q11.6 16.2 11.6 15 V4"/><path d="M5.4 6.5 V13.6 M8.6 6.5 V13.6"/></g></svg>
</div>
<div class="t" style="left:1651.5px;top:694.37px;font-size:17.4px;color:#6c757d;font-weight:400;">Previous</div>
<div class="btn" style="left:1732px;top:683px;width:41px;height:42px;border-radius:6px;background:#34b40c;font-size:17px">1</div><div class="t" style="left:1787.3px;top:695.16px;font-size:17.3px;color:#6c757d;font-weight:400;">Next</div>
<div class="a" style="left:352px;top:725px;width:1487px;height:15px;background:#f1f1f1"></div><div class="a" style="left:369px;top:727px;width:1451px;height:13px;background:#c1c1c1"></div><svg class="a" style="left:356px;top:729px" width="8" height="9" viewBox="0 0 8 9"><path d="M6 1 L2 4.5 L6 8 Z" fill="#a3a3a3"/></svg><svg class="a" style="left:1827px;top:729px" width="8" height="9" viewBox="0 0 8 9"><path d="M2 1 L6 4.5 L2 8 Z" fill="#505050"/></svg></body></html>
